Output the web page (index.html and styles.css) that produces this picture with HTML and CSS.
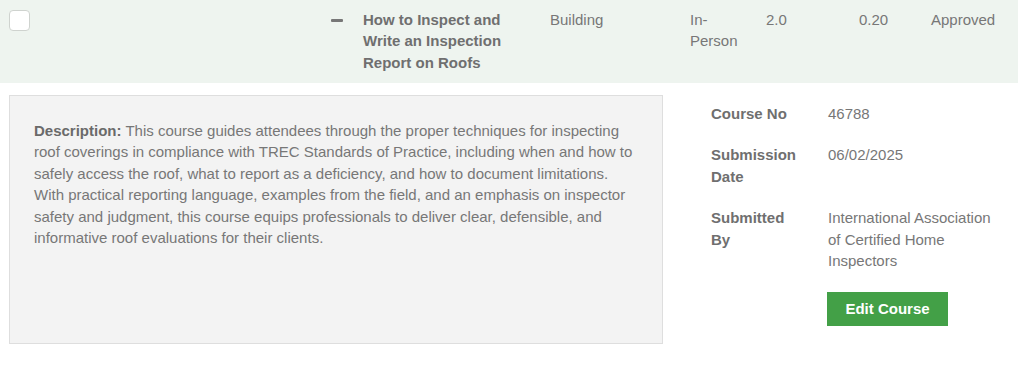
FILE: index.html
```html
<!DOCTYPE html>
<html lang="en">
<head>
  <meta charset="UTF-8">
  <title>Courses</title>
  <link rel="stylesheet" href="styles.css">
</head>
<body>
  <div class="course-list">
    <div class="course-row">
      <div class="cell cell-check"><span class="check-box"></span></div>
      <div class="cell cell-toggle"><span class="toggle-minus"></span></div>
      <div class="cell cell-title">How to Inspect and Write an Inspection Report on Roofs</div>
      <div class="cell cell-category">Building</div>
      <div class="cell cell-type">In-Person</div>
      <div class="cell cell-hours">2.0</div>
      <div class="cell cell-credit">0.20</div>
      <div class="cell cell-status">Approved</div>
    </div>
    <div class="course-detail">
      <div class="detail-desc">
        <strong>Description:</strong> This course guides attendees through the proper techniques for inspecting roof coverings in compliance with TREC Standards of Practice, including when and how to safely access the roof, what to report as a deficiency, and how to document limitations. With practical reporting language, examples from the field, and an emphasis on inspector safety and judgment, this course equips professionals to deliver clear, defensible, and informative roof evaluations for their clients.
      </div>
      <div class="detail-meta">
        <div class="meta-label">Course No</div>
        <div class="meta-value">46788</div>
        <div class="meta-label">Submission Date</div>
        <div class="meta-value">06/02/2025</div>
        <div class="meta-label">Submitted By</div>
        <div class="meta-value">International Association of Certified Home Inspectors</div>
        <div></div>
        <div><button class="edit-btn">Edit Course</button></div>
      </div>
    </div>
  </div>
</body>
</html>
```

FILE: styles.css
```css
body {
  margin: 0;
  background: #fff;
  color: #777;
  font-family: "Liberation Sans", Arial, sans-serif;
  font-size: 15px;
  line-height: 1.42857;
}
.course-list {
  width: 1018px;
}
.course-row {
  display: grid;
  grid-template-columns: 320px 43px 187px 140px 76px 93px 72px 87px;
  background: #eef4ef;
  height: 83px;
  box-sizing: border-box;
  padding-top: 9px;
}
.cell {
  padding-right: 16px;
}
.cell-check {
  padding-left: 9px;
  padding-top: 1px;
}
.check-box {
  display: block;
  width: 19px;
  height: 19px;
  background: #fff;
  border: 1px solid #cfd3cf;
  border-radius: 4px;
}
.cell-toggle {
  padding-left: 11px;
}
.toggle-minus {
  display: block;
  width: 12px;
  height: 3px;
  margin-top: 10px;
  background: #777;
  border-radius: 1px;
}
.cell-title {
  font-weight: bold;
  color: #6f6f6f;
  padding-right: 30px;
}
.cell-type {
  padding-right: 22px;
}
.course-detail {
  display: flex;
  padding-top: 12px;
}
.detail-desc {
  width: 604px;
  height: 199px;
  margin-left: 9px;
  padding: 24px;
  background: #f3f3f3;
  border: 1px solid #dedede;
}
.detail-desc strong {
  color: #6a6a6a;
}
.detail-meta {
  display: grid;
  grid-template-columns: 88px 166px;
  column-gap: 29px;
  row-gap: 20px;
  align-content: start;
  padding-left: 48px;
  padding-top: 8px;
}
.meta-label {
  font-weight: bold;
  color: #6f6f6f;
}
.edit-btn {
  display: block;
  width: 121px;
  height: 34px;
  margin-left: -1px;
  background: #43a047;
  color: #fff;
  border: none;
  font-family: inherit;
  font-size: 15px;
  font-weight: bold;
  cursor: pointer;
}
```
